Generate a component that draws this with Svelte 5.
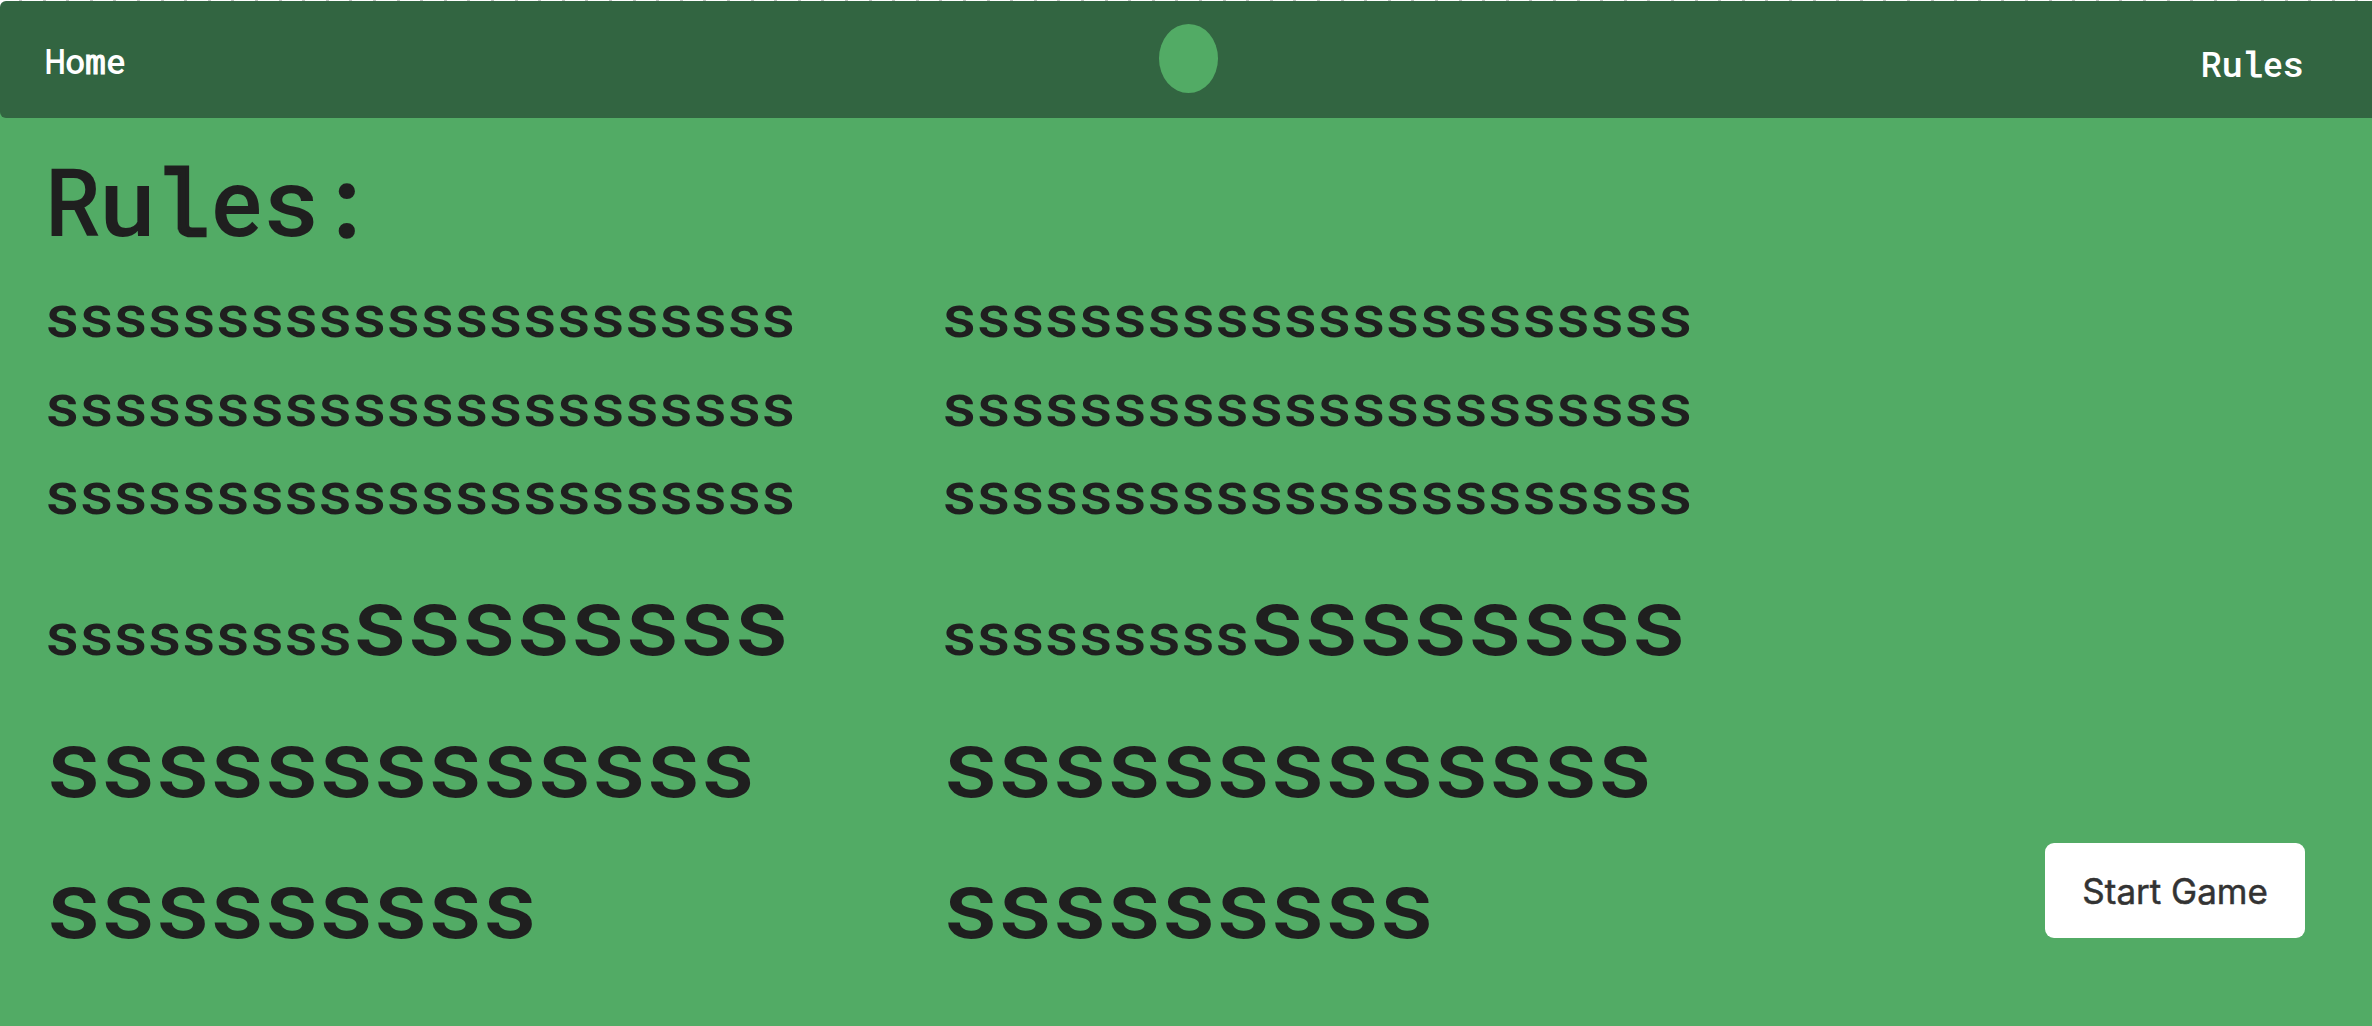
<script>
  const rules = [1, 2];
  const long = 's'.repeat(22);
</script>

{#snippet mono(text)}
  <span class="mono">{#each text.split('') as c}<span class="cell {c === 'l' || c === 'm' ? 'slab' : ''} g-{c === ':' ? 'colon' : c}">{c}</span>{/each}</span>
{/snippet}

<div class="page">
  <nav>
    <a class="home" href="#home">{@render mono('Home')}</a>
    <span class="logo"></span>
    <a class="rules" href="#rules">{@render mono('Rules')}</a>
  </nav>
  <main>
    <h1>{@render mono('Rules:')}</h1>
    <div class="columns">
      {#each rules as r (r)}
        <section>
          <p>{long}</p>
          <p>{long}</p>
          <p>{long}</p>
          <p class="big first"><span class="small">{'s'.repeat(9)}</span>{'s'.repeat(8)}</p>
          <p class="big">{'s'.repeat(13)}</p>
          <p class="big">{'s'.repeat(9)}</p>
        </section>
      {/each}
    </div>
    <button>Start Game</button>
  </main>
</div>

<style>
  :global(body) { margin: 0; background: #52ab65; }
  .page {
    height: 1026px;
    box-sizing: border-box;
    overflow: hidden;
    display: flex;
    flex-direction: column;
    background: #52ab65;
    color: #1f1f1f;
    font-family: Roboto, sans-serif;
    font-weight: 500;
  }
  nav {
    height: 117.5px;
    flex: none;
    box-sizing: border-box;
    padding: 1px 68.5px 0 44.5px;
    display: grid;
    grid-template-columns: 1114.5px 59px 1fr;
    background:
      repeating-linear-gradient(90deg, transparent 0 19px, #c4c4c4 19px 22px, transparent 22px 23.6px) 0 0 / 100% 1px no-repeat,
      linear-gradient(#fff, #fff) 0 0 / 100% 8px no-repeat,
      #52ab65;
    position: relative;
    z-index: 0;
  }
  nav::before {
    content: '';
    position: absolute;
    inset: 1px 0 0;
    z-index: -1;
    background: #326541;
    border-radius: 6px 0 0 6px;
  }
  a { color: #fff; text-decoration: none; font-size: 35px; line-height: 40px; }
  .home { margin-top: 42px; }
  .rules { margin-top: 45px; justify-self: end; }
  .logo { margin-top: 23px; width: 59px; height: 68.5px; border-radius: 50%; background: #52ab65; }
  .mono { display: inline-flex; align-items: baseline; }
  .cell { width: 0.583em; display: flex; justify-content: center; }
  .slab { font-family: 'Liberation Mono', monospace; -webkit-text-stroke: 0.034em currentColor; }
  .g-H { transform: scaleX(0.86); }
  .g-R { transform: translateX(0.005em) scaleX(0.93); }
  .rules .g-R { transform: translateX(-0.03em) scaleX(0.95); }
  .g-u { transform: scaleX(1.05); }
  .g-s { transform: scaleX(1.09); }
  .g-colon { transform: translateX(0.006em); -webkit-text-stroke: 0.035em currentColor; }
  main { flex: 1; position: relative; padding: 17.8px 0 0 45px; }
  h1 { margin: 0; font-size: 94px; line-height: 138px; font-weight: 500; height: 138px; }
  .columns { display: grid; grid-template-columns: 897px 897px; }
  p { margin: 0; font-size: 58.5px; line-height: 88.5px; height: 88.5px; letter-spacing: 1.17px; padding-left: 1px; white-space: nowrap; transform: scaleX(1.09); transform-origin: 0 50%; }
  .big { font-size: 94px; line-height: 141.6px; height: 141.6px; letter-spacing: 1.65px; padding-left: 2.2px; }
  .first { margin-top: 14.5px; padding-left: 1px; }
  .small { font-size: 58.5px; line-height: 0; letter-spacing: 1.17px; margin-right: 0.7px; }
  button {
    position: absolute;
    right: 67px;
    bottom: 88.5px;
    width: 259.7px;
    height: 94.5px;
    border: 0;
    padding: 1px 0 0;
    border-radius: 9px;
    background: #fff;
    color: #333;
    font: 400 35px Inter, sans-serif;
    -webkit-text-stroke: 0.5px #333;
  }
</style>
